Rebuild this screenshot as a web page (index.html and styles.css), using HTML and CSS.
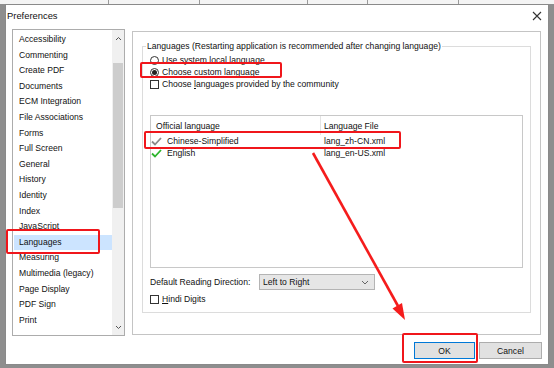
FILE: index.html
```html
<!DOCTYPE html>
<html>
<head>
<meta charset="utf-8">
<link rel="stylesheet" href="styles.css">
</head>
<body>
<div class="desk">
  <span class="seg s1"></span><span class="seg s2"></span><span class="seg s3"></span><span class="seg s4"></span><span class="seg s5"></span><span class="seg s6"></span>
</div>
<div class="dialog">
  <div class="titlebar">
    <span class="title">Preferences</span>
    <svg class="close" width="10" height="10" viewBox="0 0 10 10"><path d="M1 1 L9 9 M9 1 L1 9" stroke="#333" stroke-width="1.1" fill="none"/></svg>
  </div>
  <div class="main">
    <div class="catlist">
      <ul class="items">
        <li>Accessibility</li>
        <li>Commenting</li>
        <li>Create PDF</li>
        <li>Documents</li>
        <li>ECM Integration</li>
        <li>File Associations</li>
        <li>Forms</li>
        <li>Full Screen</li>
        <li>General</li>
        <li>History</li>
        <li>Identity</li>
        <li>Index</li>
        <li>JavaScript</li>
        <li class="sel">Languages</li>
        <li>Measuring</li>
        <li>Multimedia (legacy)</li>
        <li>Page Display</li>
        <li>PDF Sign</li>
        <li>Print</li>
      </ul>
      <div class="scrollbar">
        <svg class="sarrow" width="7" height="5" viewBox="0 0 7 5"><path d="M1 4 L3.5 1.5 L6 4" stroke="#555" fill="none" stroke-width="1"/></svg>
        <div class="track"><div class="thumb"></div></div>
        <svg class="sarrow" width="7" height="5" viewBox="0 0 7 5"><path d="M1 1 L3.5 3.5 L6 1" stroke="#555" fill="none" stroke-width="1"/></svg>
      </div>
    </div>
    <div class="panel">
      <fieldset class="group">
        <legend>Languages (Restarting application is recommended after changing language)</legend>
        <div class="opt"><span class="radio"></span><span>Use system local language</span></div>
        <div class="opt"><span class="radio on"></span><span>Choose custom language</span></div>
        <div class="opt"><span class="check"></span><span>Choose <u>l</u>anguages provided by the community</span></div>
        <div class="langlist">
          <div class="lhead">
            <div class="c1">Official language</div>
            <div class="c2">Language File</div>
          </div>
          <div class="lrow">
            <div class="c1"><svg class="tick" width="11" height="9" viewBox="0 0 11 9"><path d="M1 4.5 L4 7.5 L10 1" stroke="#8a8a8a" stroke-width="1.8" fill="none"/></svg>Chinese-Simplified</div>
            <div class="c2">lang_zh-CN.xml</div>
          </div>
          <div class="lrow">
            <div class="c1"><svg class="tick" width="11" height="9" viewBox="0 0 11 9"><path d="M1 4.5 L4 7.5 L10 1" stroke="#2db52d" stroke-width="1.8" fill="none"/></svg>English</div>
            <div class="c2">lang_en-US.xml</div>
          </div>
        </div>
        <div class="dirrow">
          <span class="dirlabel">Default Reading Direction:</span>
          <div class="select">
            <span>Left to Right</span>
            <svg width="8" height="5" viewBox="0 0 8 5"><path d="M1 1 L4 4 L7 1" stroke="#666" fill="none" stroke-width="1"/></svg>
          </div>
        </div>
        <div class="opt hindi"><span class="check"></span><span><u>H</u>indi Digits</span></div>
      </fieldset>
    </div>
  </div>
  <div class="buttons">
    <button class="btn ok">OK</button>
    <button class="btn cancel">Cancel</button>
  </div>
</div>
<svg class="annot" width="554" height="368" viewBox="0 0 554 368">
  <rect x="141" y="63" width="140" height="14" rx="1" fill="none" stroke="#f0161b" stroke-width="2"/>
  <rect x="145" y="132" width="255" height="16" rx="1" fill="none" stroke="#f0161b" stroke-width="2"/>
  <rect x="7" y="230" width="92" height="23" rx="1" fill="none" stroke="#f0161b" stroke-width="2"/>
  <rect x="403" y="334" width="74" height="28" rx="1" fill="none" stroke="#f0161b" stroke-width="2"/>
  <line x1="313" y1="153" x2="398" y2="306" stroke="#f51c1c" stroke-width="2.6"/>
  <polygon points="405,320 392.5,308.5 402,303" fill="#f51c1c"/>
</svg>
</body>
</html>
```

FILE: styles.css
```css
* { box-sizing: border-box; }
html, body { margin: 0; padding: 0; }
body {
  width: 554px;
  height: 368px;
  overflow: hidden;
  background: #8e8e8e;
  font-family: "Liberation Sans", Arial, sans-serif;
  font-size: 8.6px;
  color: #111;
  position: relative;
}
.desk {
  height: 4px;
  background: #f4f4f4;
  display: flex;
}
.seg { height: 4px; border-right: 1px solid #9a9a9a; }
.s1 { width: 109px; }
.s2 { width: 91px; }
.s3 { width: 108px; }
.s4 { width: 60px; }
.s5 { width: 91px; }
.s6 { flex: 1; border-right: none; }

.dialog {
  margin-left: 5px;
  width: 544px;
  height: 361px;
  background: #fff;
  border: 1px solid #8a8a8a;
  display: flex;
  flex-direction: column;
}
.titlebar {
  height: 21px;
  display: flex;
  align-items: center;
  justify-content: space-between;
  padding: 0 6px 0 1px;
  font-size: 9.4px;
}
.close { margin-top: 1px; }
.main {
  display: flex;
  align-items: flex-start;
  padding: 3px 0 0 6px;
}
.catlist {
  width: 113px;
  height: 307px;
  border: 1px solid #acacac;
  display: flex;
  overflow: hidden;
}
.items {
  list-style: none;
  margin: 0;
  padding: 2px 0 0 1px;
  flex: 1;
  min-width: 0;
}
.items li {
  line-height: 15.6px;
  height: 15.6px;
  padding-left: 5px;
  white-space: nowrap;
}
.items li.sel { background: #cce4ff; }
.scrollbar {
  width: 12px;
  background: #f0f0f0;
  display: flex;
  flex-direction: column;
  align-items: center;
}
.sarrow { margin: 6px 0 5px; flex: none; }
.track { flex: 1; width: 100%; padding: 17px 1px 0; }
.thumb { height: 145px; background: #cdcdcd; }

.panel {
  margin: 2px 0 0 7px;
  width: 409px;
  height: 304px;
  border: 1px solid #c4c4c4;
  padding: 8px 0 0 9px;
}
.group {
  margin: 0;
  width: 389px;
  min-width: 0;
  border: 1px solid #dcdcdc;
  padding: 2px 0 7px 0;
}
.group legend {
  padding: 0 1px;
  margin-left: 3px;
  line-height: 12px;
  font-size: 8.6px;
}
.opt {
  display: flex;
  align-items: center;
  height: 12px;
  line-height: 12px;
  margin-left: 7px;
  white-space: nowrap;
}
.radio {
  width: 9px;
  height: 9px;
  border: 1px solid #333;
  border-radius: 50%;
  margin-right: 3px;
  display: flex;
  align-items: center;
  justify-content: center;
  background: #fff;
  flex: none;
}
.radio.on::after {
  content: "";
  width: 5px;
  height: 5px;
  border-radius: 50%;
  background: #222;
}
.check {
  width: 9px;
  height: 9px;
  border: 1px solid #333;
  margin-right: 3px;
  background: #fff;
  flex: none;
}
.langlist {
  margin: 25px 0 0 7px;
  width: 373px;
  height: 153px;
  border: 1px solid #c8c8c8;
}
.lhead, .lrow { display: flex; }
.lhead { height: 19px; align-items: center; }
.lhead .c1 {
  width: 170px;
  height: 100%;
  border-right: 1px solid #e3e3e3;
  padding-left: 5px;
  display: flex;
  align-items: center;
}
.lhead .c2 { padding-left: 3px; }
.lrow { height: 12px; line-height: 12px; }
.lrow .c1 {
  width: 170px;
  display: flex;
  align-items: center;
}
.lrow .c2 { padding-left: 3px; }
.tick { margin-right: 5px; flex: none; }

.dirrow {
  display: flex;
  align-items: center;
  margin: 6px 0 0 7px;
  height: 16px;
}
.dirlabel { width: 109px; white-space: nowrap; }
.select {
  width: 116px;
  height: 16px;
  background: #e6e6e6;
  border: 1px solid #b4b4b4;
  display: flex;
  align-items: center;
  justify-content: space-between;
  padding: 0 5px 0 3px;
}
.hindi { margin-top: 3px; }

.buttons {
  display: flex;
  justify-content: flex-end;
  gap: 4px;
  padding: 6px 6px 0 0;
}
.btn {
  height: 17px;
  margin: 0;
  padding: 0;
  font-family: "Liberation Sans", Arial, sans-serif;
  font-size: 8.6px;
  color: #111;
  background: #e1e1e1;
  border: 1px solid #adadad;
  border-radius: 0;
}
.btn.ok { width: 61px; border-color: #0078d7; }
.btn.cancel { width: 63px; }

.annot {
  position: absolute;
  left: 0;
  top: 0;
  pointer-events: none;
}
```
